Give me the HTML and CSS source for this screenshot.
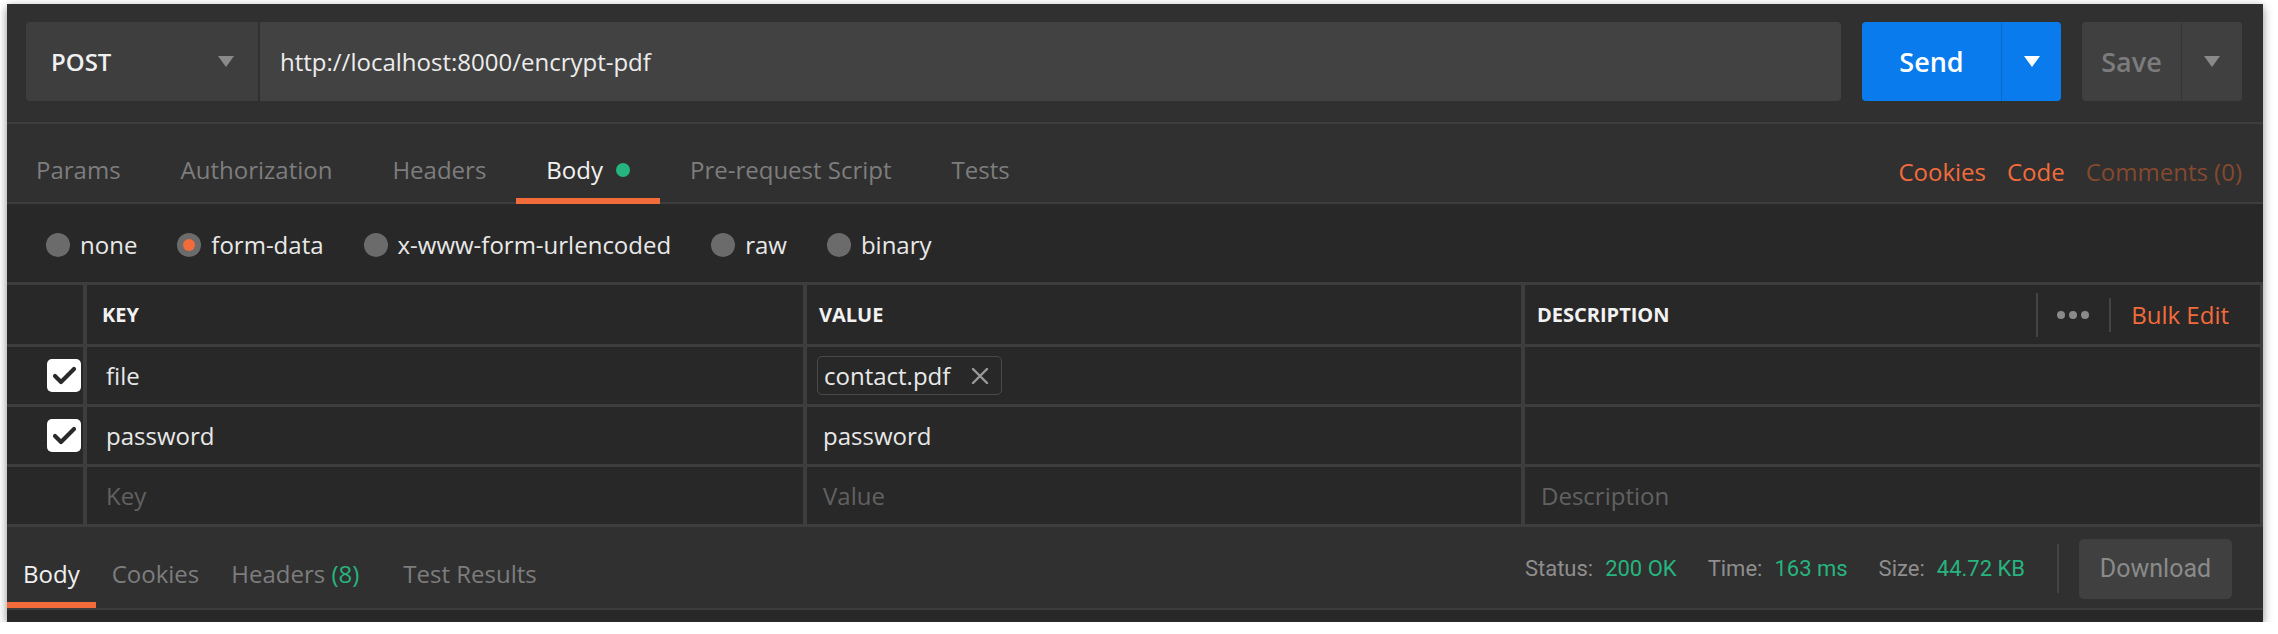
FILE: index.html
```html
<!DOCTYPE html>
<html>
<head>
<meta charset="utf-8">
<link rel="stylesheet" href="styles.css">
</head>
<body>
<div class="window">
  <div class="request-bar">
    <div class="method"><span>POST</span><span class="caret grey"></span></div>
    <div class="url">http://localhost:8000/encrypt-pdf</div>
    <div class="btn send"><span class="btn-main">Send</span><span class="btn-drop"><span class="caret white"></span></span></div>
    <div class="btn save"><span class="btn-main">Save</span><span class="btn-drop"><span class="caret grey"></span></span></div>
  </div>

  <div class="tabs">
    <div class="tab-list">
      <span class="tab">Params</span>
      <span class="tab">Authorization</span>
      <span class="tab">Headers</span>
      <span class="tab active">Body<span class="dot"></span></span>
      <span class="tab">Pre-request Script</span>
      <span class="tab">Tests</span>
    </div>
    <div class="links">
      <span class="link">Cookies</span>
      <span class="link">Code</span>
      <span class="link muted">Comments (0)</span>
    </div>
  </div>

  <div class="radios">
    <div class="radio"><span class="circle"></span>none</div>
    <div class="radio"><span class="circle"><span class="inner"></span></span>form-data</div>
    <div class="radio"><span class="circle"></span>x-www-form-urlencoded</div>
    <div class="radio"><span class="circle"></span>raw</div>
    <div class="radio"><span class="circle"></span>binary</div>
  </div>

  <div class="kv">
    <div class="cell"></div>
    <div class="cell head key">KEY</div>
    <div class="cell head">VALUE</div>
    <div class="cell head desc-head">
      <span>DESCRIPTION</span>
      <span class="head-actions">
        <span class="vsep tall"></span>
        <span class="dots"><i></i><i></i><i></i></span>
        <span class="vsep short"></span>
        <span class="bulk">Bulk Edit</span>
      </span>
    </div>

    <div class="cell chk"><span class="checkbox"><svg width="34" height="33" viewBox="0 0 34 33"><polyline points="8,17 14,23 27,10" fill="none" stroke="#2a2a2a" stroke-width="4.2" stroke-linecap="round" stroke-linejoin="round"/></svg></span></div>
    <div class="cell key">file</div>
    <div class="cell chip-cell"><span class="chip">contact.pdf<svg class="x" width="18" height="16" viewBox="0 0 18 16"><path d="M2 1 L16 15 M16 1 L2 15" stroke="#9a9a9a" stroke-width="2.4" stroke-linecap="round"/></svg></span></div>
    <div class="cell"></div>

    <div class="cell chk"><span class="checkbox"><svg width="34" height="33" viewBox="0 0 34 33"><polyline points="8,17 14,23 27,10" fill="none" stroke="#2a2a2a" stroke-width="4.2" stroke-linecap="round" stroke-linejoin="round"/></svg></span></div>
    <div class="cell key">password</div>
    <div class="cell">password</div>
    <div class="cell"></div>

    <div class="cell"></div>
    <div class="cell ph key">Key</div>
    <div class="cell ph">Value</div>
    <div class="cell ph">Description</div>
  </div>

  <div class="footer">
    <div class="ftabs">
      <span class="ftab active">Body</span>
      <span class="ftab">Cookies</span>
      <span class="ftab">Headers&nbsp;<span class="green">(8)</span></span>
      <span class="ftab last">Test Results</span>
    </div>
    <div class="status">
      <span class="stat">Status:<span class="green val">200 OK</span></span>
      <span class="stat">Time:<span class="green val">163 ms</span></span>
      <span class="stat">Size:<span class="green val">44.72 KB</span></span>
      <span class="fsep"></span>
      <span class="download">Download</span>
    </div>
  </div>
</div>
</body>
</html>
```

FILE: styles.css
```css
body {
  margin: 0;
  background: #ffffff;
  font-family: "Open Sans", "Noto Sans", sans-serif;
}

.window {
  margin: 4px 0 0 7px;
  width: 2256px;
  height: 618px;
  background: #282828;
  box-shadow: 0 3px 9px rgba(0, 0, 0, 0.45);
  display: flex;
  flex-direction: column;
  overflow: hidden;
}

/* request bar */
.request-bar {
  box-sizing: border-box;
  height: 120px;
  padding: 18px 21px 0 19px;
  display: flex;
  align-items: flex-start;
  background: #303030;
  border-bottom: 2px solid #3d3d3d;
}

.method {
  box-sizing: border-box;
  width: 232px;
  height: 79px;
  margin-right: 2px;
  padding: 0 24px 0 25px;
  display: flex;
  align-items: center;
  justify-content: space-between;
  background: #3e3e3e;
  border-radius: 4px 0 0 4px;
  color: #f0f0f0;
  font-weight: 600;
  font-size: 24px;
}

.caret {
  width: 0;
  height: 0;
  border-left: 8px solid transparent;
  border-right: 8px solid transparent;
  border-top: 11px solid #8a8a8a;
}
.caret.white { border-top-color: #ffffff; }
.caret.grey { border-top-color: #8a8a8a; }

.url {
  flex: 1;
  height: 79px;
  box-sizing: border-box;
  padding-left: 20px;
  display: flex;
  align-items: center;
  background: #424242;
  border-radius: 0 4px 4px 0;
  color: #ececec;
  font-size: 24px;
}

.btn {
  display: flex;
  height: 79px;
  margin-left: 21px;
  border-radius: 4px;
  font-size: 27px;
  font-weight: 600;
}
.btn-main {
  display: flex;
  align-items: center;
  justify-content: center;
}
.btn-drop {
  flex: 1;
  display: flex;
  align-items: center;
  justify-content: center;
}
.send {
  width: 199px;
  background: #097bed;
  color: #ffffff;
}
.send .btn-main { width: 139px; }
.send .btn-drop { border-left: 1px solid rgba(0, 0, 0, 0.13); }
.save {
  width: 160px;
  background: #404040;
  color: #7c7c7c;
}
.save .btn-main { width: 99px; }
.save .btn-drop { border-left: 1px solid #363636; }

/* tabs */
.tabs {
  box-sizing: border-box;
  height: 80px;
  display: flex;
  justify-content: space-between;
  background: #303030;
  border-bottom: 2px solid #3d3d3d;
}
.tab-list {
  display: flex;
  margin-left: -1px;
}
.tab {
  box-sizing: border-box;
  height: 80px;
  margin-bottom: -2px;
  padding: 16px 30px 0;
  border-bottom: 6px solid transparent;
  display: flex;
  align-items: center;
  font-size: 24px;
  color: #7d7d7d;
}
.tab.active {
  color: #f2f2f2;
  border-bottom-color: #f26b3a;
}
.dot {
  width: 14px;
  height: 14px;
  margin-left: 13px;
  margin-top: 2px;
  border-radius: 50%;
  background: #26b47f;
}
.links {
  display: flex;
  align-items: center;
  gap: 21px;
  padding: 20px 21px 4px 0;
  font-size: 24px;
}
.link { color: #f26b3a; }
.link.muted { color: #84492f; }

/* radios */
.radios {
  box-sizing: border-box;
  height: 78px;
  padding: 3px 0 0 39px;
  display: flex;
  align-items: center;
  gap: 40px;
  font-size: 24px;
  color: #e8e8e8;
}
.radio {
  display: flex;
  align-items: center;
  gap: 10px;
}
.circle {
  width: 24px;
  height: 24px;
  border-radius: 50%;
  background: #6b6b6b;
  display: flex;
  align-items: center;
  justify-content: center;
}
.inner {
  width: 12px;
  height: 12px;
  border-radius: 50%;
  background: #f26b3a;
}

/* key-value table */
.kv {
  display: grid;
  grid-template-columns: 76px 716px 714px 1fr;
  grid-template-rows: 59px 57px 57px 57px;
  gap: 3px 4px;
  padding: 3px 3px 3px 0;
  background: #3d3d3d;
}
.cell {
  box-sizing: border-box;
  background: #282828;
  display: flex;
  align-items: center;
  padding-left: 16px;
  font-size: 24px;
  color: #e8e8e8;
}
.cell.key { padding-left: 19px; }
.cell.head {
  padding-left: 12px;
  font-size: 20px;
  font-weight: 700;
  color: #f2f2f2;
}
.cell.head.key { padding-left: 15px; }
.cell.ph { color: #616161; }
.cell.chk {
  justify-content: flex-end;
  padding: 0 2px 0 0;
}
.checkbox {
  width: 34px;
  height: 33px;
  border-radius: 5px;
  background: #ffffff;
  display: flex;
}
.desc-head {
  justify-content: space-between;
  padding-right: 31px;
}
.head-actions {
  display: flex;
  align-items: center;
}
.vsep {
  width: 2px;
  background: #444444;
}
.vsep.tall { height: 44px; margin-right: 19px; }
.vsep.short { height: 34px; margin-right: 20px; }
.dots {
  display: flex;
  gap: 4px;
  margin-right: 20px;
}
.dots i {
  width: 8px;
  height: 8px;
  border-radius: 50%;
  background: #8a8a8a;
}
.bulk {
  font-size: 24px;
  font-weight: 400;
  color: #f26b3a;
}
.chip-cell { padding-left: 10px; }
.chip {
  box-sizing: border-box;
  height: 39px;
  padding: 0 12px 0 6px;
  display: flex;
  align-items: center;
  gap: 21px;
  border: 1.5px solid #4a4a4a;
  border-radius: 5px;
}

/* footer */
.footer {
  box-sizing: border-box;
  height: 83px;
  display: flex;
  justify-content: space-between;
  background: #303030;
  border-bottom: 2px solid #3d3d3d;
}
.ftabs { display: flex; }
.ftab {
  box-sizing: border-box;
  height: 81px;
  padding: 18px 16px 0;
  border-bottom: 6px solid transparent;
  display: flex;
  align-items: center;
  font-size: 24px;
  color: #7d7d7d;
}
.ftab.active {
  color: #f0f0f0;
  border-bottom-color: #f26b3a;
}
.ftab.last { margin-left: 12px; }
.green { color: #26b47f; }

.status {
  display: flex;
  align-items: center;
  padding: 2px 31px 0 0;
  font-family: Roboto, "Liberation Sans", sans-serif;
  font-size: 22px;
  color: #8e8e8e;
}
.stat { margin-left: 31px; }
.val { margin-left: 12px; }
.fsep {
  width: 2px;
  height: 49px;
  margin: 0 20px 0 32px;
  background: #444444;
}
.download {
  width: 153px;
  height: 60px;
  border-radius: 5px;
  background: #404040;
  color: #8a8a8a;
  font-size: 25px;
  display: flex;
  align-items: center;
  justify-content: center;
}
```
